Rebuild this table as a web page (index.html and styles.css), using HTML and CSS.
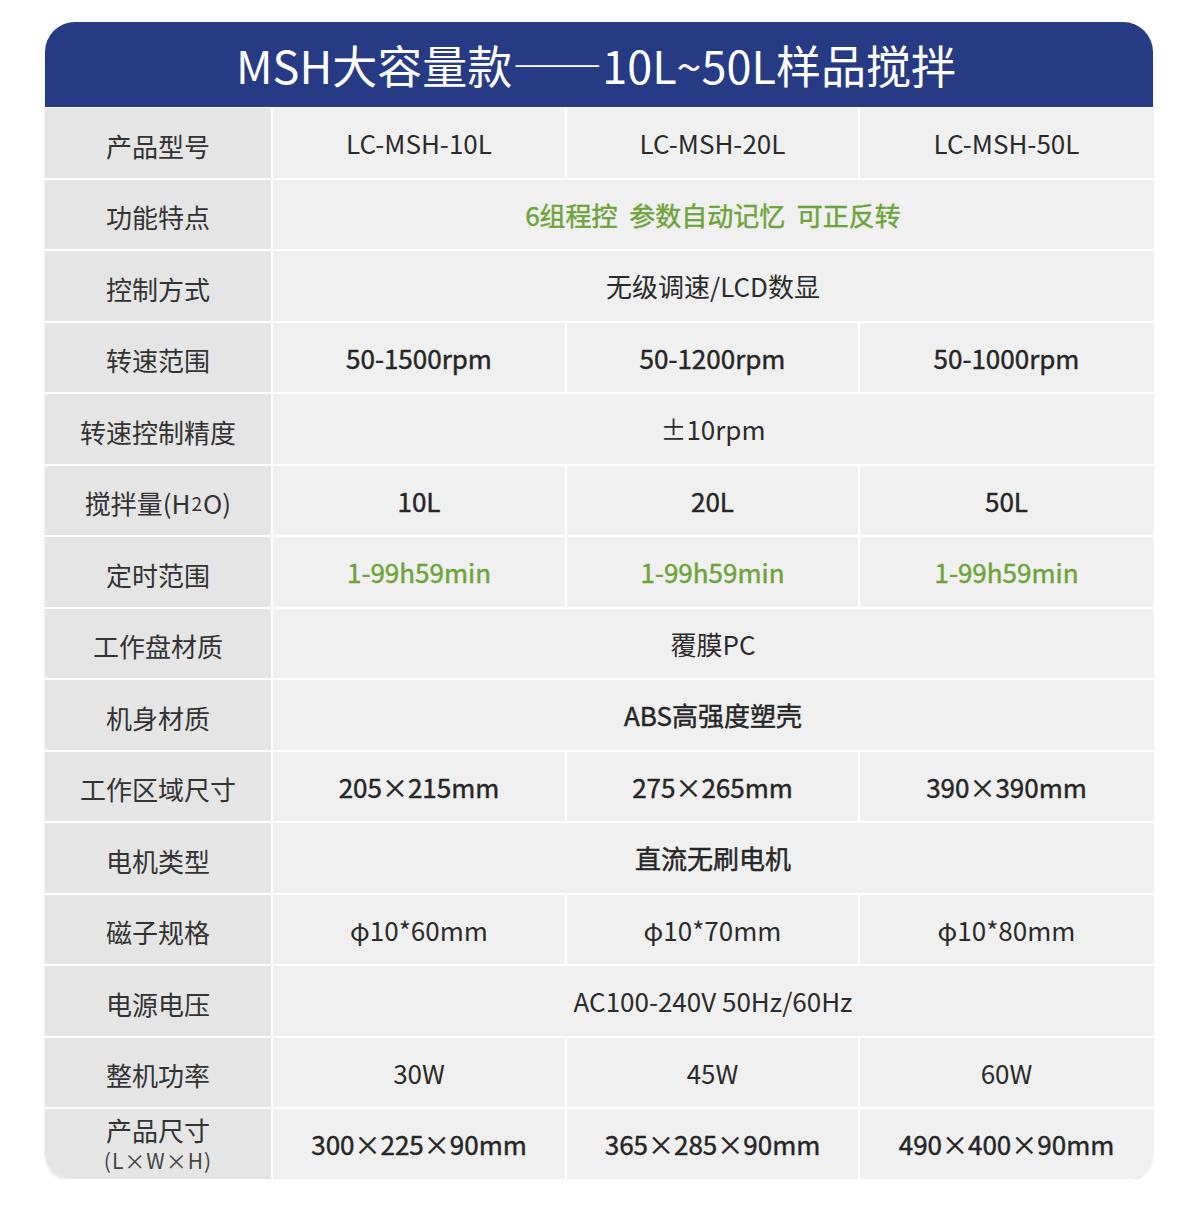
FILE: index.html
```html
<!DOCTYPE html>
<html lang="zh-CN">
<head>
<meta charset="utf-8">
<title>MSH大容量款</title>
<link rel="stylesheet" href="styles.css">
</head>
<body>
<div class="card">
  <div class="title">MSH大容量款——10L~50L样品搅拌</div>
  <div class="grid">
    <div class="label">产品型号</div>
    <div class="cell">LC-MSH-10L</div>
    <div class="cell">LC-MSH-20L</div>
    <div class="cell">LC-MSH-50L</div>

    <div class="label">功能特点</div>
    <div class="cell span green">6组程控&nbsp;&nbsp;参数自动记忆&nbsp;&nbsp;可正反转</div>

    <div class="label">控制方式</div>
    <div class="cell span">无级调速/LCD数显</div>

    <div class="label">转速范围</div>
    <div class="cell med">50-1500rpm</div>
    <div class="cell med">50-1200rpm</div>
    <div class="cell med">50-1000rpm</div>

    <div class="label">转速控制精度</div>
    <div class="cell span">±10rpm</div>

    <div class="label">搅拌量(H<sub>2</sub>O)</div>
    <div class="cell med">10L</div>
    <div class="cell med">20L</div>
    <div class="cell med">50L</div>

    <div class="label">定时范围</div>
    <div class="cell med green">1-99h59min</div>
    <div class="cell med green">1-99h59min</div>
    <div class="cell med green">1-99h59min</div>

    <div class="label">工作盘材质</div>
    <div class="cell span">覆膜PC</div>

    <div class="label">机身材质</div>
    <div class="cell span med">ABS高强度塑壳</div>

    <div class="label">工作区域尺寸</div>
    <div class="cell med">205×215mm</div>
    <div class="cell med">275×265mm</div>
    <div class="cell med">390×390mm</div>

    <div class="label">电机类型</div>
    <div class="cell span med">直流无刷电机</div>

    <div class="label">磁子规格</div>
    <div class="cell">φ10*60mm</div>
    <div class="cell">φ10*70mm</div>
    <div class="cell">φ10*80mm</div>

    <div class="label">电源电压</div>
    <div class="cell span">AC100-240V 50Hz/60Hz</div>

    <div class="label">整机功率</div>
    <div class="cell">30W</div>
    <div class="cell">45W</div>
    <div class="cell">60W</div>

    <div class="label two"><span class="main">产品尺寸</span><span class="sub">(L×W×H)</span></div>
    <div class="cell med">300×225×90mm</div>
    <div class="cell med">365×285×90mm</div>
    <div class="cell med">490×400×90mm</div>
  </div>
</div>
</body>
</html>
```

FILE: styles.css
```css
html, body {
  margin: 0;
  padding: 0;
  background: #ffffff;
}

body {
  font-family: "Noto Sans CJK SC", "Noto Sans", sans-serif;
  color: #333333;
}

.card {
  width: 1108px;
  margin: 22px 0 0 45px;
  border-radius: 30px 30px 26px 26px;
  overflow: hidden;
  background: #ffffff;
  box-shadow: 0 2px 3px rgba(0, 0, 0, 0.12);
}

.title {
  height: 85px;
  background: #273b85;
  color: #ffffff;
  font-size: 45px;
  line-height: 85px;
  text-align: center;
  padding-right: 6px;
}

.grid {
  display: grid;
  grid-template-columns: 226px 292px 291px 293px;
  grid-auto-rows: 69.5px;
  column-gap: 2px;
  row-gap: 2px;
  padding-top: 1px;
  background: #ffffff;
}

.label,
.cell {
  display: flex;
  align-items: center;
  justify-content: center;
  font-size: 26px;
  white-space: nowrap;
}

.label {
  background: #e5e5e5;
  color: #333333;
  padding-top: 5px;
  box-sizing: border-box;
}

.label sub {
  font-size: 19px;
  vertical-align: -5px;
  line-height: 0;
  margin: 0 1px;
}

.label.two {
  flex-direction: column;
  padding-top: 0;
}

.label.two .main {
  line-height: 32px;
}

.label.two .sub {
  font-size: 21px;
  line-height: 28px;
  letter-spacing: 1px;
  color: #444444;
}

.cell {
  background: #f0f0f0;
  color: #2b2b2b;
}

.cell.span {
  grid-column: span 3;
}

.cell.med {
  color: #262626;
  -webkit-text-stroke: 0.45px #262626;
}

.cell.green {
  color: #6ea33b;
  -webkit-text-stroke: 0.45px #6ea33b;
}
```
